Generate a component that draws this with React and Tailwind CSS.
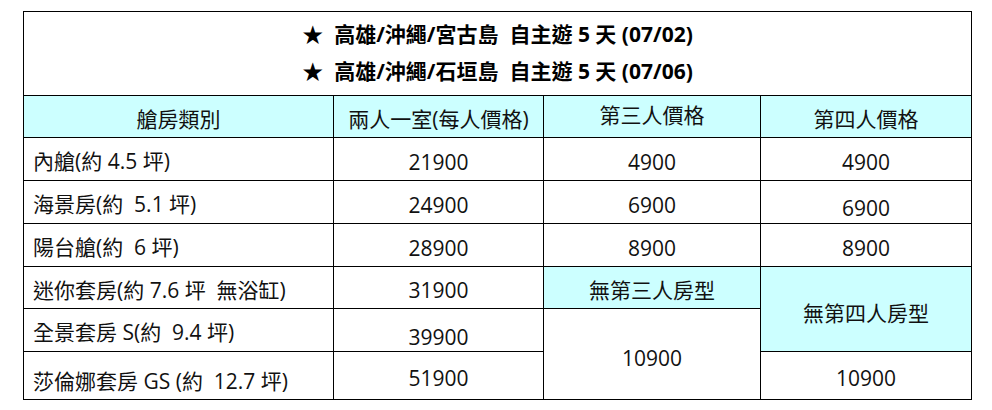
const rows = [
  { name: "內艙(約 4.5 坪)", two: "21900", three: "4900", four: "4900", h: "h-[43px]" },
  { name: "海景房(約  5.1 坪)", two: "24900", three: "6900", four: "6900", h: "h-[43px]", fourCls: "pt-[11px]" },
  { name: "陽台艙(約  6 坪)", two: "28900", three: "8900", four: "8900", h: "h-[43px]" },
];

const cell = "border border-black text-center align-middle pt-[5px] leading-[24px]";
const nameCell = "border border-black text-left align-middle pl-[9px] pt-[4px] leading-[24px] whitespace-pre";

export default function App() {
  return (
    <div className="bg-white w-[992px] h-[410px] pt-[11px] pl-[23px] text-[#111] text-[21px] font-['Open_Sans','Noto_Sans_CJK_TC',sans-serif]">
      <table className="table-fixed border-collapse w-[948px]">
        <colgroup>
          <col className="w-[310px]" />
          <col className="w-[210px]" />
          <col className="w-[217px]" />
          <col className="w-[211px]" />
        </colgroup>
        <tbody>
          <tr className="h-[84px]">
            <td colSpan={4} className="border border-black text-center align-middle pb-[2px] font-bold text-black text-[21px] leading-[37px] whitespace-pre">
              <div>★  高雄/沖繩/宮古島  自主遊 5 天 (07/02)</div>
              <div>★  高雄/沖繩/石垣島  自主遊 5 天 (07/06)</div>
            </td>
          </tr>
          <tr className="h-[42px] bg-[#ccffff]">
            <td className={cell}>艙房類別</td>
            <td className={cell}>兩人一室(每人價格)</td>
            <td className={cell + " !pt-0 !pb-[4px]"}>第三人價格</td>
            <td className={cell}>第四人價格</td>
          </tr>
          {rows.map((r) => (
            <tr key={r.name} className={r.h}>
              <td className={nameCell}>{r.name}</td>
              <td className={cell}>{r.two}</td>
              <td className={cell}>{r.three}</td>
              <td className={cell + " " + (r.fourCls || "")}>{r.four}</td>
            </tr>
          ))}
          <tr className="h-[42px]">
            <td className={nameCell}>迷你套房(約 7.6 坪  無浴缸)</td>
            <td className={cell}>31900</td>
            <td className={cell + " bg-[#ccffff]"}>無第三人房型</td>
            <td rowSpan={2} className={cell + " bg-[#ccffff] pt-[8px]"}>無第四人房型</td>
          </tr>
          <tr className="h-[43px]">
            <td className={nameCell}>全景套房 S(約  9.4 坪)</td>
            <td className={cell + " pt-[14px]"}>39900</td>
            <td rowSpan={2} className={cell + " pt-[8px]"}>10900</td>
          </tr>
          <tr className="h-[48px]">
            <td className={nameCell + " pt-[10px]"}>莎倫娜套房 GS (約  12.7 坪)</td>
            <td className={cell}>51900</td>
            <td className={cell}>10900</td>
          </tr>
        </tbody>
      </table>
    </div>
  );
}
